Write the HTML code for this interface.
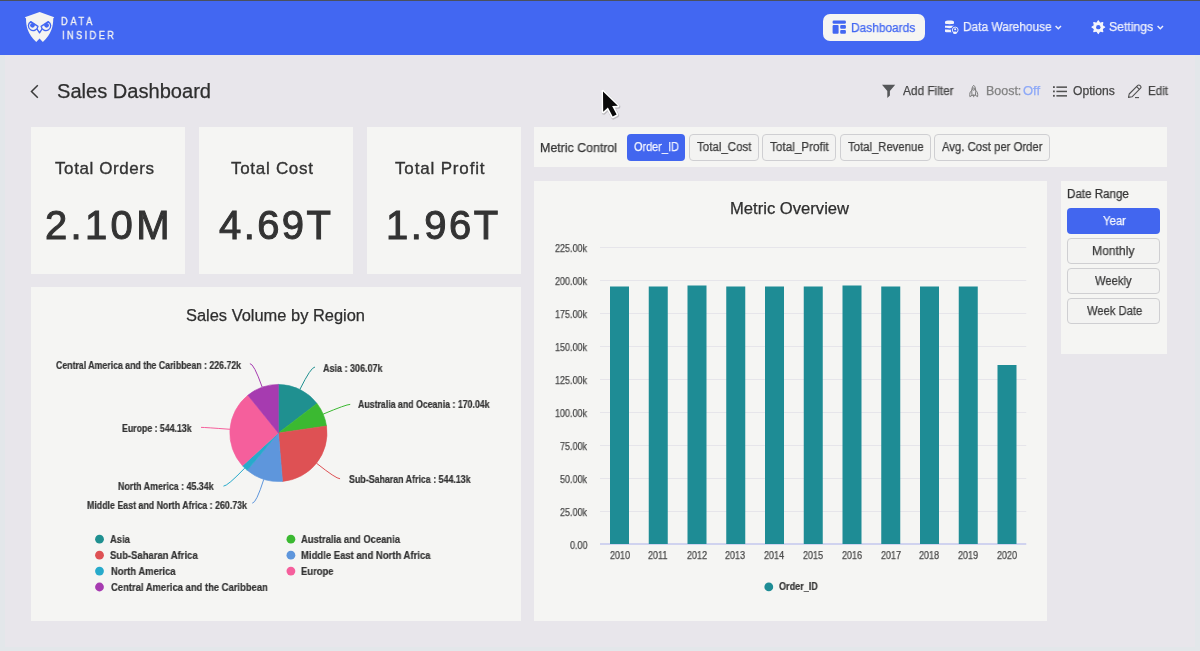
<!DOCTYPE html>
<html><head><meta charset="utf-8">
<style>
html,body{margin:0;padding:0;}
body{width:1200px;height:651px;overflow:hidden;position:relative;background:#e8e6eb;font-family:"Liberation Sans",sans-serif;}
.t{position:absolute;white-space:nowrap;line-height:1;transform-origin:0 0;will-change:transform;}
.abs{position:absolute;}
.card{position:absolute;background:#f5f5f3;}
.btn{position:absolute;box-sizing:border-box;border:1px solid #cfcfd2;border-radius:4px;background:#f3f3f2;}
.btnp{position:absolute;box-sizing:border-box;border-radius:4px;background:#4266ef;}
</style></head><body>
<!-- page borders -->
<div class="abs" style="left:0;top:0;width:5px;height:651px;background:#e3e7ea"></div>
<div class="abs" style="left:1195px;top:0;width:5px;height:651px;background:#e3e7ea"></div>
<div class="abs" style="left:0;top:647px;width:1200px;height:4px;background:#e3e7ea"></div>
<!-- header -->
<div class="abs" style="left:0;top:0;width:1200px;height:55px;background:#4267f2"></div>
<div class="abs" style="left:0;top:0;width:1200px;height:1px;background:#4a505e"></div>
<!-- owl logo -->
<svg class="abs" style="left:20px;top:8px" width="40" height="40" viewBox="0 0 651 651">
  <path fill="#f4f4f2" d="M320 66 L557 150 L541 172 C541 300 515 420 372 554 L318 496 L265 554 C123 420 98 300 98 172 L78 150 Z"/>
  <g stroke="#4267f2" stroke-width="22" fill="#f4f4f2" stroke-linejoin="round">
    <path d="M176 222 L292 300 A78 78 0 1 1 176 222 Z"/>
    <path d="M460 222 L344 300 A78 78 0 1 0 460 222 Z"/>
    <path d="M276 340 L318 405 L360 340" fill="none"/>
  </g>
  <circle cx="203" cy="282" r="38" fill="#4267f2"/>
  <circle cx="433" cy="282" r="38" fill="#4267f2"/>
</svg>
<!-- nav pill -->
<div class="abs" style="left:823px;top:14px;width:102px;height:27px;border-radius:7px;background:#f5f5f3"></div>
<svg class="abs" style="left:832px;top:20px" width="15" height="15" viewBox="0 0 15 15">
  <rect x="0.6" y="0.5" width="13.3" height="3.3" rx="1.2" fill="#4267f2"/>
  <rect x="0.6" y="5" width="6" height="8.7" rx="1" fill="#4267f2"/>
  <rect x="8.2" y="5" width="5.7" height="3.7" rx="1" fill="#4267f2"/>
  <rect x="8.2" y="10" width="5.7" height="3.7" rx="1" fill="#4267f2"/>
</svg>
<!-- db icon -->
<svg class="abs" style="left:944px;top:20px" width="16" height="16" viewBox="0 0 16 16">
  <g fill="#f2f3fb">
    <path d="M1 1.8 C1 0 10 0 10 1.8 V3.6 C10 4.4 1 4.4 1 3.6 Z"/>
    <path d="M1 5.4 C1 5.9 10 5.9 10 5.4 V7.6 C10 8.4 1 8.4 1 7.6 Z"/>
    <path d="M1 9.3 C1 9.8 10 9.8 10 9.3 V11.4 C10 12.6 1 12.6 1 11.4 Z"/>
  </g>
  <circle cx="11.2" cy="10" r="4.4" fill="#4267f2"/>
  <circle cx="11.2" cy="10" r="2.9" fill="none" stroke="#f2f3fb" stroke-width="0.9"/>
  <circle cx="11.2" cy="9.2" r="1" fill="#f2f3fb"/>
  <ellipse cx="11" cy="12.8" rx="2" ry="1.3" fill="#f2f3fb"/>
</svg>
<svg class="abs" style="left:1055px;top:25px" width="8" height="6" viewBox="0 0 8 6"><path d="M0.6 0.9 L3.3 3.8 L6.0 0.9" stroke="#eef0fb" stroke-width="1.4" fill="none"/></svg>
<!-- gear -->
<svg class="abs" style="left:1090px;top:19px" width="17" height="17" viewBox="0 0 17 17">
  <circle cx="8.3" cy="8.15" r="4.6" fill="#f4f5fb"/>
  <polygon points="8.30,1.75 9.91,4.27 12.83,3.62 12.18,6.54 14.70,8.15 12.18,9.76 12.83,12.68 9.91,12.03 8.30,14.55 6.69,12.03 3.77,12.68 4.42,9.76 1.90,8.15 4.42,6.54 3.77,3.62 6.69,4.27" fill="#f4f5fb" stroke="#f4f5fb" stroke-width="1.1" stroke-linejoin="round"/>
  <circle cx="8.3" cy="8.15" r="2.2" fill="#4267f2"/>
</svg>
<svg class="abs" style="left:1157px;top:25px" width="8" height="6" viewBox="0 0 8 6"><path d="M0.6 0.9 L3.3 3.8 L6.0 0.9" stroke="#eef0fb" stroke-width="1.4" fill="none"/></svg>

<!-- back chevron -->
<svg class="abs" style="left:28px;top:83px" width="14" height="17" viewBox="0 0 14 17"><path d="M9.8 2.3 L3.5 8.5 L9.8 14.7" stroke="#3a3a3a" stroke-width="1.5" fill="none"/></svg>
<!-- filter icon -->
<svg class="abs" style="left:881px;top:84px" width="16" height="15" viewBox="0 0 16 15"><path d="M1 0.8 H14.2 L8.9 6.9 V11.6 L6.3 14.0 V6.9 Z" fill="#555759"/></svg>
<!-- rocket -->
<svg class="abs" style="left:964px;top:82px" width="20" height="18" viewBox="0 0 20 18"><g stroke="#7a7a7a" stroke-width="1" fill="none" stroke-linejoin="round"><path d="M9.7 3.3 C11.7 4.8 12 8 11.5 13.3 H8 C7.5 8 7.7 4.8 9.7 3.3 Z"/><path d="M8 8.3 C6 9.5 5.4 11.5 5.9 14.7 L8 13.3"/><path d="M11.5 8.3 C13.5 9.5 14 11.5 13.6 14.7 L11.5 13.3"/><circle cx="9.7" cy="7.1" r="1.1"/><path d="M9.7 12.5 V15.2"/></g></svg>
<!-- list icon -->
<svg class="abs" style="left:1052px;top:85px" width="16" height="13" viewBox="0 0 16 13"><g fill="#505050"><rect x="1" y="1.2" width="1.8" height="1.8"/><rect x="1" y="5.5" width="1.8" height="1.8"/><rect x="1" y="9.9" width="1.8" height="1.8"/><rect x="4.4" y="1.4" width="10.6" height="1.5"/><rect x="4.4" y="5.7" width="10.6" height="1.5"/><rect x="4.4" y="10.1" width="10.6" height="1.5"/></g></svg>
<!-- pencil -->
<svg class="abs" style="left:1127px;top:84px" width="17" height="15" viewBox="0 0 17 15"><g stroke="#505050" stroke-width="1.1" fill="none" stroke-linejoin="round"><path d="M1.5 13.4 L2.2 10 L10.8 1.4 C11.4 0.8 12.2 0.8 12.8 1.4 L13.6 2.2 C14.2 2.8 14.2 3.6 13.6 4.2 L5 12.8 Z"/><path d="M9.6 2.6 L12.4 5.4"/></g><path d="M8 13.6 H12" stroke="#505050" stroke-width="1.1"/></svg>

<!-- cursor -->
<svg class="abs" style="left:594px;top:82px" width="36" height="44" viewBox="594 82 36 44">
  <path d="M603 91.4 L603.2 111.8 L607.9 107.4 L612.7 116.6 L616.6 114.5 L612.1 106 L617.8 105.8 Z" fill="rgba(0,0,0,0.25)" stroke="rgba(0,0,0,0.18)" stroke-width="4" stroke-linejoin="round" transform="translate(0.6,1)"/>
  <path d="M603 91.4 L603.2 111.8 L607.9 107.4 L612.7 116.6 L616.6 114.5 L612.1 106 L617.8 105.8 Z" fill="#fff" stroke="#fff" stroke-width="3.2" stroke-linejoin="round"/>
  <path d="M603 91.4 L603.2 111.8 L607.9 107.4 L612.7 116.6 L616.6 114.5 L612.1 106 L617.8 105.8 Z" fill="#0a0a0a"/>
</svg>

<!-- KPI cards -->
<div class="card" style="left:31px;top:127px;width:154px;height:147px"></div>
<div class="card" style="left:199px;top:127px;width:154px;height:147px"></div>
<div class="card" style="left:367px;top:127px;width:154px;height:147px"></div>
<!-- pie card -->
<div class="card" style="left:31px;top:287px;width:490px;height:334px"></div>
<!-- metric control -->
<div class="card" style="left:534px;top:127px;width:633px;height:40px"></div>
<div class="btnp" style="left:627px;top:134px;width:58px;height:27px"></div>
<div class="btn" style="left:689px;top:134px;width:70px;height:27px"></div>
<div class="btn" style="left:762px;top:134px;width:74px;height:27px"></div>
<div class="btn" style="left:840px;top:134px;width:91px;height:27px"></div>
<div class="btn" style="left:934px;top:134px;width:116px;height:27px"></div>
<!-- chart card -->
<div class="card" style="left:534px;top:181px;width:513px;height:440px"></div>
<!-- date range -->
<div class="card" style="left:1061px;top:181px;width:106px;height:173px"></div>
<div class="btnp" style="left:1067px;top:208px;width:93px;height:26px"></div>
<div class="btn" style="left:1067px;top:238px;width:93px;height:26px"></div>
<div class="btn" style="left:1067px;top:268px;width:93px;height:26px"></div>
<div class="btn" style="left:1067px;top:298px;width:93px;height:26px"></div>

<!-- bar chart -->
<svg class="abs" style="left:0;top:0" width="1200" height="651">
  <g fill="#e6e5ea">
    <rect x="600" y="247" width="426.25" height="1"/>
    <rect x="600" y="280" width="426.25" height="1"/>
    <rect x="600" y="313" width="426.25" height="1"/>
    <rect x="600" y="346" width="426.25" height="1"/>
    <rect x="600" y="379" width="426.25" height="1"/>
    <rect x="600" y="412" width="426.25" height="1"/>
    <rect x="600" y="445" width="426.25" height="1"/>
    <rect x="600" y="478" width="426.25" height="1"/>
    <rect x="600" y="511" width="426.25" height="1"/>
  </g>
  <rect x="600" y="543" width="426.25" height="2" fill="#d0d3ef"/>
  <g fill="#1e8c95" id="bars"><rect x="610.00" y="286.5" width="19" height="257.5"/><rect x="648.75" y="286.5" width="19" height="257.5"/><rect x="687.50" y="285.5" width="19" height="258.5"/><rect x="726.25" y="286.5" width="19" height="257.5"/><rect x="765.00" y="286.5" width="19" height="257.5"/><rect x="803.75" y="286.5" width="19" height="257.5"/><rect x="842.50" y="285.5" width="19" height="258.5"/><rect x="881.25" y="286.5" width="19" height="257.5"/><rect x="920.00" y="286.5" width="19" height="257.5"/><rect x="958.75" y="286.5" width="19" height="257.5"/><rect x="997.50" y="365" width="19" height="179"/></g>
  <circle cx="768.8" cy="586.9" r="4.4" fill="#1e8c95"/>
</svg>

<!-- pie -->
<svg class="abs" style="left:0;top:0" width="1200" height="651"><path d="M278.4,433.0 L278.40,384.40 A48.6,48.6 0 0 1 316.98,403.44 Z" fill="#1f9090" stroke="#1f9090" stroke-width="0.6" stroke-linejoin="round"/><path d="M278.4,433.0 L316.98,403.44 A48.6,48.6 0 0 1 326.49,426.01 Z" fill="#3bb931" stroke="#3bb931" stroke-width="0.6" stroke-linejoin="round"/><path d="M278.4,433.0 L326.49,426.01 A48.6,48.6 0 0 1 282.52,481.42 Z" fill="#de5154" stroke="#de5154" stroke-width="0.6" stroke-linejoin="round"/><path d="M278.4,433.0 L282.52,481.42 A48.6,48.6 0 0 1 247.23,470.29 Z" fill="#5e96dc" stroke="#5e96dc" stroke-width="0.6" stroke-linejoin="round"/><path d="M278.4,433.0 L247.23,470.29 A48.6,48.6 0 0 1 242.47,465.72 Z" fill="#27aacb" stroke="#27aacb" stroke-width="0.6" stroke-linejoin="round"/><path d="M278.4,433.0 L242.47,465.72 A48.6,48.6 0 0 1 247.87,395.19 Z" fill="#f55f9c" stroke="#f55f9c" stroke-width="0.6" stroke-linejoin="round"/><path d="M278.4,433.0 L247.87,395.19 A48.6,48.6 0 0 1 278.40,384.40 Z" fill="#a63bb0" stroke="#a63bb0" stroke-width="0.6" stroke-linejoin="round"/><path d="M299.91,389.42 Q310.98,367.00 314.98,367.00" stroke="#1f9090" stroke-width="1" fill="none"/><path d="M323.18,414.12 Q346.22,404.40 350.22,404.40" stroke="#3bb931" stroke-width="1" fill="none"/><path d="M316.47,463.21 Q336.05,478.75 340.05,478.75" stroke="#de5154" stroke-width="1" fill="none"/><path d="M263.77,479.35 Q256.25,503.19 252.25,503.19" stroke="#5e96dc" stroke-width="1" fill="none"/><path d="M244.77,468.09 Q227.47,486.14 223.47,486.14" stroke="#27aacb" stroke-width="1" fill="none"/><path d="M229.94,429.29 Q205.01,427.38 201.01,427.38" stroke="#f55f9c" stroke-width="1" fill="none"/><path d="M262.21,387.18 Q253.88,363.60 249.88,363.60" stroke="#a63bb0" stroke-width="1" fill="none"/><circle cx="99.5" cy="539.2" r="4.4" fill="#1f9090"/><circle cx="99.5" cy="555.2" r="4.4" fill="#de5154"/><circle cx="99.5" cy="571.1" r="4.4" fill="#27aacb"/><circle cx="99.5" cy="587" r="4.4" fill="#a63bb0"/><circle cx="290.9" cy="539.2" r="4.4" fill="#3bb931"/><circle cx="290.9" cy="555.2" r="4.4" fill="#5e96dc"/><circle cx="290.9" cy="571.1" r="4.4" fill="#f55f9c"/></svg>

<span class="t" id="t0" style="left:61.49px;top:15.60px;font-size:10.8px;font-weight:500;color:#f2f2f4;-webkit-text-stroke:0.35px #f2f2f4;letter-spacing:3.088px;transform:scaleX(0.86);">DATA</span>
<span class="t" id="t1" style="left:61.86px;top:29.60px;font-size:10.8px;font-weight:500;color:#f2f2f4;-webkit-text-stroke:0.35px #f2f2f4;letter-spacing:2.769px;transform:scaleX(0.86);">INSIDER</span>
<span class="t" id="t2" style="left:850.83px;top:21.75px;font-size:12.5px;font-weight:400;color:#4267f2;-webkit-text-stroke:0.25px #4267f2;transform:scaleX(0.9524);">Dashboards</span>
<span class="t" id="t3" style="left:962.78px;top:20.75px;font-size:12.5px;font-weight:400;color:#eef0fb;-webkit-text-stroke:0.25px #eef0fb;transform:scaleX(0.9487);">Data Warehouse</span>
<span class="t" id="t4" style="left:1109.34px;top:20.75px;font-size:12.5px;font-weight:400;color:#eef0fb;-webkit-text-stroke:0.25px #eef0fb;transform:scaleX(0.9779);">Settings</span>
<span class="t" id="t5" style="left:57.39px;top:81.00px;font-size:20px;font-weight:400;color:#2e2e2e;-webkit-text-stroke:0.25px #2e2e2e;transform:scaleX(1.0040);">Sales Dashboard</span>
<span class="t" id="t6" style="left:902.61px;top:85.00px;font-size:12px;font-weight:400;color:#454545;-webkit-text-stroke:0.25px #454545;transform:scaleX(0.9867);">Add Filter</span>
<span class="t" id="t7" style="left:986.45px;top:85.00px;font-size:12px;font-weight:400;color:#828282;-webkit-text-stroke:0.25px #828282;transform:scaleX(1.0385);">Boost:</span>
<span class="t" id="t8" style="left:1022.96px;top:85.00px;font-size:12px;font-weight:400;color:#8ea9f7;-webkit-text-stroke:0.25px #8ea9f7;transform:scaleX(1.0819);">Off</span>
<span class="t" id="t9" style="left:1073.07px;top:85.00px;font-size:12px;font-weight:400;color:#454545;-webkit-text-stroke:0.25px #454545;transform:scaleX(1.0093);">Options</span>
<span class="t" id="t10" style="left:1147.55px;top:85.00px;font-size:12px;font-weight:400;color:#454545;-webkit-text-stroke:0.25px #454545;transform:scaleX(0.9673);">Edit</span>
<span class="t" id="t11" style="left:55.39px;top:160.00px;font-size:17px;font-weight:400;color:#333;-webkit-text-stroke:0.35px #333;letter-spacing:0.587px;">Total Orders</span>
<span class="t" id="t12" style="left:231.39px;top:160.00px;font-size:17px;font-weight:400;color:#333;-webkit-text-stroke:0.35px #333;letter-spacing:0.708px;">Total Cost</span>
<span class="t" id="t13" style="left:394.59px;top:160.00px;font-size:17px;font-weight:400;color:#333;-webkit-text-stroke:0.35px #333;letter-spacing:0.839px;">Total Profit</span>
<span class="t" id="t14" style="left:45.16px;top:205.00px;font-size:40px;font-weight:400;color:#333;-webkit-text-stroke:1.0px #333;letter-spacing:3.334px;">2.10M</span>
<span class="t" id="t15" style="left:218.50px;top:205.00px;font-size:40px;font-weight:400;color:#333;-webkit-text-stroke:1.0px #333;letter-spacing:2.418px;">4.69T</span>
<span class="t" id="t16" style="left:386.14px;top:205.00px;font-size:40px;font-weight:400;color:#333;-webkit-text-stroke:1.0px #333;letter-spacing:2.449px;">1.96T</span>
<span class="t" id="t17" style="left:539.64px;top:141.75px;font-size:12.5px;font-weight:400;color:#333;-webkit-text-stroke:0.25px #333;transform:scaleX(0.9908);">Metric Control</span>
<span class="t" id="t18" style="left:633.60px;top:140.75px;font-size:12.5px;font-weight:400;color:#f4f6fe;-webkit-text-stroke:0.25px #f4f6fe;transform:scaleX(0.8721);">Order_ID</span>
<span class="t" id="t19" style="left:697.15px;top:140.75px;font-size:12.5px;font-weight:400;color:#3a3a3a;-webkit-text-stroke:0.25px #3a3a3a;transform:scaleX(0.9221);">Total_Cost</span>
<span class="t" id="t20" style="left:770.40px;top:140.75px;font-size:12.5px;font-weight:400;color:#3a3a3a;-webkit-text-stroke:0.25px #3a3a3a;transform:scaleX(0.9390);">Total_Profit</span>
<span class="t" id="t21" style="left:847.60px;top:140.75px;font-size:12.5px;font-weight:400;color:#3a3a3a;-webkit-text-stroke:0.25px #3a3a3a;transform:scaleX(0.9065);">Total_Revenue</span>
<span class="t" id="t22" style="left:941.85px;top:140.75px;font-size:12.5px;font-weight:400;color:#3a3a3a;-webkit-text-stroke:0.25px #3a3a3a;transform:scaleX(0.9061);">Avg. Cost per Order</span>
<span class="t" id="t23" style="left:1067.00px;top:188.00px;font-size:12px;font-weight:400;color:#333;-webkit-text-stroke:0.25px #333;transform:scaleX(0.9667);">Date Range</span>
<span class="t" id="t24" style="left:1102.55px;top:214.75px;font-size:12.5px;font-weight:400;color:#f4f6fe;-webkit-text-stroke:0.25px #f4f6fe;transform:scaleX(0.9079);">Year</span>
<span class="t" id="t25" style="left:1092.35px;top:244.75px;font-size:12.5px;font-weight:400;color:#3a3a3a;-webkit-text-stroke:0.25px #3a3a3a;transform:scaleX(0.9701);">Monthly</span>
<span class="t" id="t26" style="left:1095.44px;top:274.75px;font-size:12.5px;font-weight:400;color:#3a3a3a;-webkit-text-stroke:0.25px #3a3a3a;transform:scaleX(0.8974);">Weekly</span>
<span class="t" id="t27" style="left:1086.89px;top:304.75px;font-size:12.5px;font-weight:400;color:#3a3a3a;-webkit-text-stroke:0.25px #3a3a3a;transform:scaleX(0.8951);">Week Date</span>
<span class="t" id="t28" style="left:730.48px;top:200.50px;font-size:16px;font-weight:400;color:#2e2e2e;-webkit-text-stroke:0.25px #2e2e2e;transform:scaleX(1.0385);">Metric Overview</span>
<span class="t" id="t29" style="left:555.43px;top:243.50px;font-size:10px;font-weight:400;color:#4a4a4a;-webkit-text-stroke:0.25px #4a4a4a;transform:scaleX(0.9000);">225.00k</span>
<span class="t" id="t30" style="left:555.43px;top:276.50px;font-size:10px;font-weight:400;color:#4a4a4a;-webkit-text-stroke:0.25px #4a4a4a;transform:scaleX(0.9000);">200.00k</span>
<span class="t" id="t31" style="left:555.43px;top:309.50px;font-size:10px;font-weight:400;color:#4a4a4a;-webkit-text-stroke:0.25px #4a4a4a;transform:scaleX(0.9000);">175.00k</span>
<span class="t" id="t32" style="left:555.43px;top:342.50px;font-size:10px;font-weight:400;color:#4a4a4a;-webkit-text-stroke:0.25px #4a4a4a;transform:scaleX(0.9000);">150.00k</span>
<span class="t" id="t33" style="left:555.43px;top:375.50px;font-size:10px;font-weight:400;color:#4a4a4a;-webkit-text-stroke:0.25px #4a4a4a;transform:scaleX(0.9000);">125.00k</span>
<span class="t" id="t34" style="left:555.43px;top:408.50px;font-size:10px;font-weight:400;color:#4a4a4a;-webkit-text-stroke:0.25px #4a4a4a;transform:scaleX(0.9000);">100.00k</span>
<span class="t" id="t35" style="left:560.42px;top:441.50px;font-size:10px;font-weight:400;color:#4a4a4a;-webkit-text-stroke:0.25px #4a4a4a;transform:scaleX(0.9000);">75.00k</span>
<span class="t" id="t36" style="left:560.42px;top:474.50px;font-size:10px;font-weight:400;color:#4a4a4a;-webkit-text-stroke:0.25px #4a4a4a;transform:scaleX(0.9000);">50.00k</span>
<span class="t" id="t37" style="left:560.42px;top:507.50px;font-size:10px;font-weight:400;color:#4a4a4a;-webkit-text-stroke:0.25px #4a4a4a;transform:scaleX(0.9000);">25.00k</span>
<span class="t" id="t38" style="left:570.01px;top:540.50px;font-size:10px;font-weight:400;color:#4a4a4a;-webkit-text-stroke:0.25px #4a4a4a;transform:scaleX(0.9000);">0.00</span>
<span class="t" id="t39" style="left:609.75px;top:550.50px;font-size:10px;font-weight:400;color:#4a4a4a;-webkit-text-stroke:0.25px #4a4a4a;transform:scaleX(0.9000);">2010</span>
<span class="t" id="t40" style="left:648.44px;top:550.50px;font-size:10px;font-weight:400;color:#4a4a4a;-webkit-text-stroke:0.25px #4a4a4a;transform:scaleX(0.9000);">2011</span>
<span class="t" id="t41" style="left:686.72px;top:550.50px;font-size:10px;font-weight:400;color:#4a4a4a;-webkit-text-stroke:0.25px #4a4a4a;transform:scaleX(0.9000);">2012</span>
<span class="t" id="t42" style="left:725.10px;top:550.50px;font-size:10px;font-weight:400;color:#4a4a4a;-webkit-text-stroke:0.25px #4a4a4a;transform:scaleX(0.9000);">2013</span>
<span class="t" id="t43" style="left:764.02px;top:550.50px;font-size:10px;font-weight:400;color:#4a4a4a;-webkit-text-stroke:0.25px #4a4a4a;transform:scaleX(0.9000);">2014</span>
<span class="t" id="t44" style="left:802.96px;top:550.50px;font-size:10px;font-weight:400;color:#4a4a4a;-webkit-text-stroke:0.25px #4a4a4a;transform:scaleX(0.9000);">2015</span>
<span class="t" id="t45" style="left:842.04px;top:550.50px;font-size:10px;font-weight:400;color:#4a4a4a;-webkit-text-stroke:0.25px #4a4a4a;transform:scaleX(0.9000);">2016</span>
<span class="t" id="t46" style="left:881.02px;top:550.50px;font-size:10px;font-weight:400;color:#4a4a4a;-webkit-text-stroke:0.25px #4a4a4a;transform:scaleX(0.9000);">2017</span>
<span class="t" id="t47" style="left:919.04px;top:550.50px;font-size:10px;font-weight:400;color:#4a4a4a;-webkit-text-stroke:0.25px #4a4a4a;transform:scaleX(0.9000);">2018</span>
<span class="t" id="t48" style="left:958.22px;top:550.50px;font-size:10px;font-weight:400;color:#4a4a4a;-webkit-text-stroke:0.25px #4a4a4a;transform:scaleX(0.9000);">2019</span>
<span class="t" id="t49" style="left:996.75px;top:550.50px;font-size:10px;font-weight:400;color:#4a4a4a;-webkit-text-stroke:0.25px #4a4a4a;transform:scaleX(0.9000);">2020</span>
<span class="t" id="t50" style="left:779.32px;top:581.50px;font-size:10px;font-weight:700;color:#333;-webkit-text-stroke:0.2px #333;transform:scaleX(0.9084);">Order_ID</span>
<span class="t" id="t51" style="left:186.31px;top:307.50px;font-size:16px;font-weight:400;color:#2e2e2e;-webkit-text-stroke:0.25px #2e2e2e;transform:scaleX(1.0265);">Sales Volume by Region</span>
<span class="t" id="t52" style="left:55.92px;top:360.50px;font-size:10px;font-weight:700;color:#333;-webkit-text-stroke:0.2px #333;transform:scaleX(0.8754);">Central America and the Caribbean : 226.72k</span>
<span class="t" id="t53" style="left:323.28px;top:363.50px;font-size:10px;font-weight:700;color:#333;-webkit-text-stroke:0.2px #333;transform:scaleX(0.8995);">Asia : 306.07k</span>
<span class="t" id="t54" style="left:358.36px;top:399.50px;font-size:10px;font-weight:700;color:#333;-webkit-text-stroke:0.2px #333;transform:scaleX(0.8763);">Australia and Oceania : 170.04k</span>
<span class="t" id="t55" style="left:122.11px;top:423.50px;font-size:10px;font-weight:700;color:#333;-webkit-text-stroke:0.2px #333;transform:scaleX(0.8752);">Europe : 544.13k</span>
<span class="t" id="t56" style="left:348.62px;top:474.50px;font-size:10px;font-weight:700;color:#333;-webkit-text-stroke:0.2px #333;transform:scaleX(0.8843);">Sub-Saharan Africa : 544.13k</span>
<span class="t" id="t57" style="left:117.70px;top:481.50px;font-size:10px;font-weight:700;color:#333;-webkit-text-stroke:0.2px #333;transform:scaleX(0.8846);">North America : 45.34k</span>
<span class="t" id="t58" style="left:87.11px;top:500.50px;font-size:10px;font-weight:700;color:#333;-webkit-text-stroke:0.2px #333;transform:scaleX(0.8819);">Middle East and North Africa : 260.73k</span>
<span class="t" id="t59" style="left:110.49px;top:533.75px;font-size:10.5px;font-weight:700;color:#333;-webkit-text-stroke:0.2px #333;transform:scaleX(0.8977);">Asia</span>
<span class="t" id="t60" style="left:110.41px;top:549.75px;font-size:10.5px;font-weight:700;color:#333;-webkit-text-stroke:0.2px #333;transform:scaleX(0.9034);">Sub-Saharan Africa</span>
<span class="t" id="t61" style="left:110.56px;top:565.75px;font-size:10.5px;font-weight:700;color:#333;-webkit-text-stroke:0.2px #333;transform:scaleX(0.8977);">North America</span>
<span class="t" id="t62" style="left:110.56px;top:581.75px;font-size:10.5px;font-weight:700;color:#333;-webkit-text-stroke:0.2px #333;transform:scaleX(0.8977);">Central America and the Caribbean</span>
<span class="t" id="t63" style="left:301.39px;top:533.75px;font-size:10.5px;font-weight:700;color:#333;-webkit-text-stroke:0.2px #333;transform:scaleX(0.8977);">Australia and Oceania</span>
<span class="t" id="t64" style="left:301.46px;top:549.75px;font-size:10.5px;font-weight:700;color:#333;-webkit-text-stroke:0.2px #333;transform:scaleX(0.9045);">Middle East and North Africa</span>
<span class="t" id="t65" style="left:301.46px;top:565.75px;font-size:10.5px;font-weight:700;color:#333;-webkit-text-stroke:0.2px #333;transform:scaleX(0.8977);">Europe</span>
</body></html>
